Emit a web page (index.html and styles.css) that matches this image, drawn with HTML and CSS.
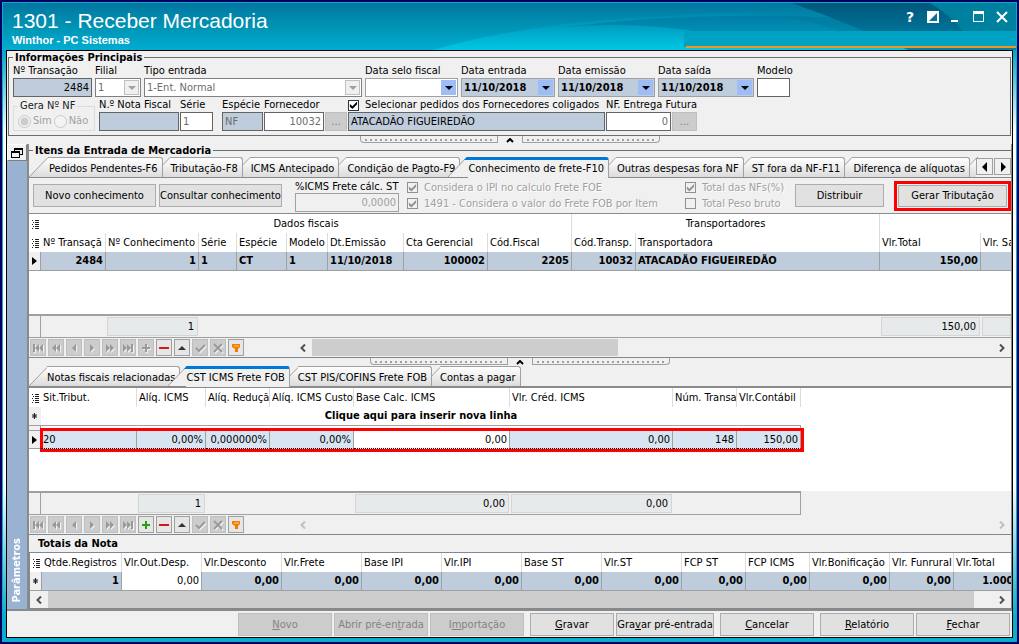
FILE: index.html
```html
<!DOCTYPE html>
<html lang="pt-BR">
<head>
    <meta charset="UTF-8">
    <meta name="viewport" content="width=device-width, initial-scale=1.0">
    <title>1301 - Receber Mercadoria</title>
    <link rel="stylesheet" href="styles.css">
</head>
<body>
    <svg class="sprite" width="0" height="0" aria-hidden="true">
        <defs>
            <linearGradient id="tabFill" x1="0" y1="0" x2="0" y2="1">
                <stop offset="0" stop-color="#ffffff"/>
                <stop offset="1" stop-color="#dcdcdc"/>
            </linearGradient>
            <symbol id="slant" viewBox="0 0 20 20"><path d="M0 20L19 0.500H20V20z" fill="url(#tabFill)"/><path d="M0 20L19 0.500H20" fill="none" stroke="#a0a0a0"/></symbol>
            <symbol id="slantOn" viewBox="0 0 20 20"><path d="M0 20L19 0H20V20z" fill="#f0f0f0"/><path d="M0 20L19 0" fill="none" stroke="#a0a0a0"/><path d="M16 3L19 0H20V3z" fill="#0078d7"/></symbol>
            <symbol id="first" viewBox="0 0 14 14"><path d="M2 3h2v8H2zM8 3v8L4 7zM12 3v8L8 7z"/></symbol>
            <symbol id="pageBack" viewBox="0 0 14 14"><path d="M7 3v8L3 7zM11 3v8L7 7z"/></symbol>
            <symbol id="back" viewBox="0 0 14 14"><path d="M9 3v8L5 7z"/></symbol>
            <symbol id="next" viewBox="0 0 14 14"><path d="M5 3v8l4-4z"/></symbol>
            <symbol id="pageNext" viewBox="0 0 14 14"><path d="M3 3v8l4-4zM7 3v8l4-4z"/></symbol>
            <symbol id="last" viewBox="0 0 14 14"><path d="M2 3v8l4-4zM6 3v8l4-4zM10 3h2v8h-2z"/></symbol>
            <symbol id="plus" viewBox="0 0 14 14"><path d="M6 3h2v3h3v2H8v3H6V8H3V6h3z"/></symbol>
            <symbol id="minus" viewBox="0 0 14 14"><path d="M2 6h10v2H2z"/></symbol>
            <symbol id="up" viewBox="0 0 14 14"><path d="M7 5l4 4H3z"/></symbol>
            <symbol id="check" viewBox="0 0 14 14"><path d="M3 7l3 3 6-6" fill="none" stroke="currentColor" stroke-width="2"/></symbol>
            <symbol id="cross" viewBox="0 0 14 14"><path d="M3 3l8 8M11 3l-8 8" fill="none" stroke="currentColor" stroke-width="2"/></symbol>
            <symbol id="funnel" viewBox="0 0 14 14"><path d="M3 3h8v3l-2 2v3H6V8L3 6z" fill="#f57c00"/><path d="M5 5h5" stroke="#ffd080"/></symbol>
            <symbol id="list" viewBox="0 0 8 10"><path d="M0 1.500h1M3 1.500h4M1 3.500h1M3 3.500h4M0 5.500h1M3 5.500h4M1 7.500h1M3 7.500h4M0 9.500h1M3 9.500h4" stroke="#222"/></symbol>
            <symbol id="marker" viewBox="0 0 6 8"><path d="M0 0v8l5-4z"/></symbol>
            <symbol id="star" viewBox="0 0 7 8"><path d="M2.500 1v6M0 4h5M0.500 2l4 4M4.500 2l-4 4" stroke="#222"/></symbol>
            <symbol id="left" viewBox="0 0 8 8"><path d="M6 0.500L2.500 4L6 7.500" fill="none" stroke="currentColor" stroke-width="2"/></symbol>
            <symbol id="right" viewBox="0 0 8 8"><path d="M2 0.500L5.500 4L2 7.500" fill="none" stroke="currentColor" stroke-width="2"/></symbol>
        </defs>
    </svg>

    <div class="window">
        <header class="titlebar">
            <svg class="waves" viewBox="0 0 1013 47" preserveAspectRatio="none" aria-hidden="true">
                <defs>
                    <linearGradient id="sky" x1="0" y1="0" x2="0" y2="1">
                        <stop offset="0" stop-color="#0376a1"/>
                        <stop offset="0.500" stop-color="#0093b4"/>
                        <stop offset="1" stop-color="#00add0"/>
                    </linearGradient>
                    <linearGradient id="glow" x1="0" y1="0" x2="0" y2="1">
                        <stop offset="0" stop-color="#0087ae"/>
                        <stop offset="1" stop-color="#00c8e4"/>
                    </linearGradient>
                    <linearGradient id="deep" x1="0" y1="0" x2="0" y2="1">
                        <stop offset="0" stop-color="#00587c"/>
                        <stop offset="1" stop-color="#0083a8"/>
                    </linearGradient>
                </defs>
                <path d="M0 0H1013V47H0z" fill="url(#sky)"/>
                <path d="M430 47Q530 18 680 12Q780 4 840 30L1013 28V47z" fill="url(#glow)"/>
                <path d="M560 24Q720 5 880 18L1013 14V30H700Q640 18 560 24z" fill="#006a93" opacity="0.400"/>
                <path d="M789 0Q850 22 905 47H1013V0z" fill="url(#deep)"/>
                <path d="M927 0Q950 14 962 30H1013V0z" fill="#00809f"/>
                <path d="M681 28H1013V44H681z" fill="#00a2c4"/>
            </svg>
            <div class="caption">
                <h1>1301 - Receber Mercadoria</h1>
                <p>Winthor - PC Sistemas</p>
            </div>
            <div class="window-buttons">
                <button type="button" aria-label="Ajuda"><span class="help">?</span></button>
                <button type="button" aria-label="Tema"><svg viewBox="0 0 12 12" width="12" height="12"><path d="M1 1h10v10H1z" fill="#0a7292" stroke="#fff" stroke-width="2"/><path d="M0 0h12L0 12z" fill="#fff"/></svg></button>
                <button type="button" aria-label="Minimizar"><svg viewBox="0 0 12 12" width="12" height="12"><path d="M1 9h7v2H1z" fill="#fff"/></svg></button>
                <button type="button" aria-label="Maximizar"><svg viewBox="0 0 12 12" width="12" height="12"><path d="M0 0h11v11H0zM1 3v7h9V3z" fill="#fff" fill-rule="evenodd"/></svg></button>
                <button type="button" aria-label="Fechar janela"><svg viewBox="0 0 12 12" width="12" height="12"><path d="M1 1l10 10M11 1L1 11" stroke="#fff" stroke-width="2"/></svg></button>
            </div>
            <div class="accent"></div>
        </header>

        <main class="client">
            <fieldset class="info">
                <legend>Informações Principais</legend>
                <div class="info-row first-row">
                    <div class="field">
                        <label for="transacao">Nº Transação</label>
                        <input id="transacao" class="blue num" value="2484" readonly>
                    </div>
                    <div class="field">
                        <label for="filial">Filial</label>
                        <span class="combo off"><select id="filial" disabled><option>1</option></select><i></i></span>
                    </div>
                    <div class="field">
                        <label for="tipo">Tipo entrada</label>
                        <span class="combo off"><select id="tipo" disabled><option>1-Ent. Normal</option></select><i></i></span>
                    </div>
                    <div class="field">
                        <label for="selo">Data selo fiscal</label>
                        <span class="combo"><select id="selo"><option></option></select><i></i></span>
                    </div>
                    <div class="field">
                        <label for="entrada">Data entrada</label>
                        <span class="combo date"><select id="entrada"><option>11/10/2018</option></select><i></i></span>
                    </div>
                    <div class="field">
                        <label for="emissao">Data emissão</label>
                        <span class="combo date"><select id="emissao"><option>11/10/2018</option></select><i></i></span>
                    </div>
                    <div class="field">
                        <label for="saida">Data saída</label>
                        <span class="combo date"><select id="saida"><option>11/10/2018</option></select><i></i></span>
                    </div>
                    <div class="field">
                        <label for="modelo">Modelo</label>
                        <input id="modelo">
                    </div>
                </div>
                <div class="info-row second-row">
                    <fieldset class="generate" disabled>
                        <legend>Gera Nº NF</legend>
                        <label><input type="radio" name="gera" checked>Sim</label>
                        <label><input type="radio" name="gera">Não</label>
                    </fieldset>
                    <div class="field">
                        <label for="nota">N.º Nota Fiscal</label>
                        <input id="nota" class="blue" readonly>
                    </div>
                    <div class="field">
                        <label for="serie">Série</label>
                        <input id="serie" class="dim" value="1">
                    </div>
                    <div class="field especie">
                        <label for="especie">Espécie</label>
                        <input id="especie" class="blue dim" value="NF" readonly>
                    </div>
                    <div class="field">
                        <label for="fornecedor">Fornecedor</label>
                        <input id="fornecedor" class="num dim" value="10032">
                    </div>
                    <button type="button" class="more" disabled>...</button>
                    <div class="field">
                        <label class="tick linked"><input type="checkbox" checked>Selecionar pedidos dos Fornecedores coligados</label>
                        <input class="blue" value="ATACADÃO FIGUEIREDÃO" aria-label="Nome do fornecedor" readonly>
                    </div>
                    <div class="field">
                        <label for="futura">NF. Entrega Futura</label>
                        <input id="futura" class="num dim" value="0">
                    </div>
                    <button type="button" class="more" disabled>...</button>
                </div>
            </fieldset>

            <div class="splitter"><span></span><svg viewBox="0 0 8 5" width="8" height="5"><path d="M1 4l3-3 3 3" fill="none" stroke="#000" stroke-width="2"/></svg><span></span></div>

            <div class="work">
                <aside class="sidebar">
                    <button type="button" class="restore" aria-label="Restaurar"><svg viewBox="0 0 12 12" width="12" height="12"><path d="M3 1h9v7H9V7h2V3H4v1H3zM0 4h9v7H0zM1 6v4h7V6z" fill-rule="evenodd"/></svg></button>
                    <div class="params"><span>Parâmetros</span></div>
                </aside>

                <section class="panel">
                    <h2 class="group-title">Itens da Entrada de Mercadoria</h2>
                    <nav class="tabs main-tabs">
                        <button type="button" class="tab"><svg><use href="#slant"/></svg><span>Pedidos Pendentes-F6</span></button>
                        <button type="button" class="tab"><svg><use href="#slant"/></svg><span>Tributação-F8</span></button>
                        <button type="button" class="tab"><svg><use href="#slant"/></svg><span>ICMS Antecipado</span></button>
                        <button type="button" class="tab"><svg><use href="#slant"/></svg><span>Condição de Pagto-F9</span></button>
                        <button type="button" class="tab active"><svg><use href="#slantOn"/></svg><span>Conhecimento de frete-F10</span></button>
                        <button type="button" class="tab"><svg><use href="#slant"/></svg><span>Outras despesas fora NF</span></button>
                        <button type="button" class="tab"><svg><use href="#slant"/></svg><span>ST fora da NF-F11</span></button>
                        <button type="button" class="tab"><svg><use href="#slant"/></svg><span>Diferença de alíquotas</span></button>
                        <span class="tab"><svg><use href="#slant"/></svg></span>
                        <div class="tab-arrows">
                            <button type="button" aria-label="Abas anteriores"><svg viewBox="0 0 6 10" width="6" height="10"><path d="M5 0v10L0 5z"/></svg></button>
                            <button type="button" aria-label="Próximas abas"><svg viewBox="0 0 6 10" width="6" height="10"><path d="M1 0v10l5-5z"/></svg></button>
                        </div>
                    </nav>

                    <div class="toolbar">
                        <button type="button" class="btn tool">Novo conhecimento</button>
                        <button type="button" class="btn tool">Consultar conhecimento</button>
                        <div class="field rate">
                            <label for="icms">%ICMS Frete cálc. ST</label>
                            <input id="icms" class="num" value="0,0000" disabled>
                        </div>
                        <div class="ticks wide">
                            <label class="tick off"><input type="checkbox" checked disabled>Considera o IPI no calculo Frete FOE</label>
                            <label class="tick off"><input type="checkbox" checked disabled>1491 - Considera o valor do Frete FOB por Item</label>
                        </div>
                        <div class="ticks">
                            <label class="tick off"><input type="checkbox" checked disabled>Total das NFs(%)</label>
                            <label class="tick off"><input type="checkbox" disabled>Total Peso bruto</label>
                        </div>
                        <button type="button" class="btn share">Distribuir</button>
                        <div class="highlight"><button type="button" class="btn">Gerar Tributação</button></div>
                    </div>

                    <div class="grid">
                        <div class="grid-body">
                            <table class="freight">
                                <colgroup><col class="w12"><col class="w65"><col class="w93"><col class="w38"><col class="w50"><col class="w41"><col class="w76"><col class="w84"><col class="w84"><col class="w64"><col class="w244"><col class="w101"><col class="w84"></colgroup>
                                <thead>
                                    <tr>
                                        <th class="mark"><svg width="8" height="10"><use href="#list"/></svg></th>
                                        <th colspan="8" class="band">Dados fiscais</th>
                                        <th colspan="2" class="band">Transportadores</th>
                                        <th colspan="2" class="band"></th>
                                    </tr>
                                    <tr>
                                        <th class="mark"><svg width="8" height="10"><use href="#list"/></svg></th>
                                        <th>Nº Transaçã</th><th>Nº Conhecimento</th><th>Série</th><th>Espécie</th><th>Modelo</th><th>Dt.Emissão</th><th>Cta Gerencial</th><th>Cód.Fiscal</th><th>Cód.Transp.</th><th>Transportadora</th><th>Vlr.Total</th><th>Vlr. Saldo</th>
                                    </tr>
                                </thead>
                                <tbody>
                                    <tr class="strong">
                                        <td class="mark"><svg width="6" height="8"><use href="#marker"/></svg></td>
                                        <td class="num">2484</td><td class="num">1</td><td>1</td><td>CT</td><td>1</td><td>11/10/2018</td><td class="num">100002</td><td class="num">2205</td><td class="num">10032</td><td>ATACADÃO FIGUEIREDÃO</td><td class="num">150,00</td><td></td>
                                    </tr>
                                </tbody>
                            </table>
                        </div>
                        <div class="summary freight-sum">
                            <span class="edge"></span><span></span><output>1</output><span></span><output>150,00</output><output></output>
                        </div>
                        <div class="navigator">
                            <button type="button" disabled aria-label="Primeiro"><svg><use href="#first"/></svg></button>
                            <button type="button" disabled aria-label="Página anterior"><svg><use href="#pageBack"/></svg></button>
                            <button type="button" disabled aria-label="Anterior"><svg><use href="#back"/></svg></button>
                            <button type="button" disabled aria-label="Próximo"><svg><use href="#next"/></svg></button>
                            <button type="button" disabled aria-label="Próxima página"><svg><use href="#pageNext"/></svg></button>
                            <button type="button" disabled aria-label="Último"><svg><use href="#last"/></svg></button>
                            <button type="button" disabled aria-label="Inserir"><svg><use href="#plus"/></svg></button>
                            <button type="button" class="red" aria-label="Excluir"><svg><use href="#minus"/></svg></button>
                            <button type="button" aria-label="Editar"><svg><use href="#up"/></svg></button>
                            <button type="button" disabled aria-label="Gravar registro"><svg><use href="#check"/></svg></button>
                            <button type="button" disabled aria-label="Cancelar registro"><svg><use href="#cross"/></svg></button>
                            <button type="button" aria-label="Filtrar"><svg><use href="#funnel"/></svg></button>
                            <div class="scrollbar offset">
                                <svg><use href="#left"/></svg><div class="track"><i class="thumb part"></i></div><svg><use href="#right"/></svg>
                            </div>
                        </div>
                    </div>

                    <div class="splitter"><span></span><svg viewBox="0 0 8 5" width="8" height="5"><path d="M1 4l3-3 3 3" fill="none" stroke="#000" stroke-width="2"/></svg><span></span></div>

                    <nav class="tabs sub-tabs">
                        <button type="button" class="tab"><svg><use href="#slant"/></svg><span>Notas fiscais relacionadas</span></button>
                        <button type="button" class="tab active"><svg><use href="#slantOn"/></svg><span>CST ICMS Frete FOB</span></button>
                        <button type="button" class="tab"><svg><use href="#slant"/></svg><span>CST PIS/COFINS Frete FOB</span></button>
                        <button type="button" class="tab"><svg><use href="#slant"/></svg><span>Contas a pagar</span></button>
                    </nav>

                    <div class="grid">
                        <div class="grid-body short">
                            <table class="taxes">
                                <colgroup><col class="w12"><col class="w96"><col class="w69"><col class="w64"><col class="w84"><col class="w156"><col class="w163"><col class="w64"><col class="w64"></colgroup>
                                <thead>
                                    <tr>
                                        <th class="mark"><svg width="8" height="10"><use href="#list"/></svg></th>
                                        <th>Sit.Tribut.</th><th>Alíq. ICMS</th><th>Alíq. Reduçã</th><th>Alíq. ICMS Custo</th><th>Base Calc. ICMS</th><th>Vlr. Créd. ICMS</th><th>Núm. Transa</th><th>Vlr.Contábil</th>
                                    </tr>
                                </thead>
                                <tbody>
                                    <tr class="insert">
                                        <td class="mark"><svg width="7" height="8"><use href="#star"/></svg></td>
                                        <td colspan="8">Clique aqui para inserir nova linha</td>
                                    </tr>
                                    <tr class="gap"><td class="mark"></td><td colspan="8"></td></tr>
                                    <tr class="picked">
                                        <td class="mark"><svg width="6" height="8"><use href="#marker"/></svg></td>
                                        <td class="start">20</td><td class="num">0,00%</td><td class="num">0,000000%</td><td class="num">0,00%</td><td class="num focus">0,00</td><td class="num">0,00</td><td class="num">148</td><td class="num end">150,00</td>
                                    </tr>
                                </tbody>
                            </table>
                        </div>
                        <div class="summary taxes-sum">
                            <span class="edge"></span><span></span><output>1</output><span></span><output>0,00</output><output>0,00</output>
                        </div>
                        <div class="navigator">
                            <button type="button" disabled aria-label="Primeiro"><svg><use href="#first"/></svg></button>
                            <button type="button" disabled aria-label="Página anterior"><svg><use href="#pageBack"/></svg></button>
                            <button type="button" disabled aria-label="Anterior"><svg><use href="#back"/></svg></button>
                            <button type="button" disabled aria-label="Próximo"><svg><use href="#next"/></svg></button>
                            <button type="button" disabled aria-label="Próxima página"><svg><use href="#pageNext"/></svg></button>
                            <button type="button" disabled aria-label="Último"><svg><use href="#last"/></svg></button>
                            <button type="button" class="green" aria-label="Inserir"><svg><use href="#plus"/></svg></button>
                            <button type="button" class="red" aria-label="Excluir"><svg><use href="#minus"/></svg></button>
                            <button type="button" aria-label="Editar"><svg><use href="#up"/></svg></button>
                            <button type="button" disabled aria-label="Gravar registro"><svg><use href="#check"/></svg></button>
                            <button type="button" disabled aria-label="Cancelar registro"><svg><use href="#cross"/></svg></button>
                            <button type="button" aria-label="Filtrar"><svg><use href="#funnel"/></svg></button>
                            <div class="scrollbar offset idle">
                                <svg><use href="#left"/></svg><div class="track"></div><svg><use href="#right"/></svg>
                            </div>
                        </div>
                    </div>

                    <h2 class="totals-title">Totais da Nota</h2>
                    <div class="totals">
                        <table>
                            <colgroup><col class="w12"><col class="w80"><col class="w80"><col class="w80"><col class="w80"><col class="w80"><col class="w80"><col class="w80"><col class="w80"><col class="w64"><col class="w64"><col class="w80"><col class="w64"><col class="w80"></colgroup>
                            <thead>
                                <tr>
                                    <th class="mark"><svg width="8" height="10"><use href="#list"/></svg></th>
                                    <th>Qtde.Registros</th><th>Vlr.Out.Desp.</th><th>Vlr.Desconto</th><th>Vlr.Frete</th><th>Base IPI</th><th>Vlr.IPI</th><th>Base ST</th><th>Vlr.ST</th><th>FCP ST</th><th>FCP ICMS</th><th>Vlr.Bonificação</th><th>Vlr. Funrural</th><th>Vlr.Total</th>
                                </tr>
                            </thead>
                            <tbody>
                                <tr class="strong">
                                    <td class="mark"><svg width="7" height="8"><use href="#star"/></svg></td>
                                    <td class="num">1</td><td class="num plain">0,00</td><td class="num">0,00</td><td class="num">0,00</td><td class="num">0,00</td><td class="num">0,00</td><td class="num">0,00</td><td class="num">0,00</td><td class="num">0,00</td><td class="num">0,00</td><td class="num">0,00</td><td class="num">0,00</td><td class="num">1.000,00</td>
                                </tr>
                            </tbody>
                        </table>
                        <div class="scrollbar">
                            <svg><use href="#left"/></svg><div class="track"><i class="thumb most"></i></div><svg><use href="#right"/></svg>
                        </div>
                    </div>
                </section>
            </div>

            <footer class="actions">
                <button type="button" class="btn" disabled><u>N</u>ovo</button>
                <button type="button" class="btn" disabled>Abrir pré-en<u>t</u>rada</button>
                <button type="button" class="btn" disabled>I<u>m</u>portação</button>
                <button type="button" class="btn save"><u>G</u>ravar</button>
                <button type="button" class="btn presave">Gra<u>v</u>ar pré-entrada</button>
                <button type="button" class="btn apart"><u>C</u>ancelar</button>
                <button type="button" class="btn apart"><u>R</u>elatório</button>
                <button type="button" class="btn"><u>F</u>echar</button>
            </footer>
        </main>
    </div>
</body>
</html>
```
FILE: styles.css
```css
* {
    box-sizing: border-box;
}
body {
    margin: 0;
    background-color: #00005f;
    color: #000;
    font-family: "DejaVu Sans Condensed", "Noto Sans", sans-serif;
    font-size: 11px;
    line-height: 14px;
}
input, select, button {
    font: inherit;
    color: inherit;
    margin: 0;
    border-radius: 0;
}
button {
    padding: 0;
}
svg {
    display: block;
    flex: none;
}
.sprite {
    position: absolute;
}

/* window frame */
.window {
    display: flex;
    flex-direction: column;
    min-height: 100vh;
    border: 2px solid #00005f;
    background: linear-gradient(#00a5c5 48px, #fff 130px, #fff 75%, #08aecb 96%);
    box-shadow: inset 0 0 0 1px #10a9c6;
}
.titlebar {
    position: relative;
    display: flex;
    justify-content: space-between;
    height: 47px;
    margin: 1px 1px 0;
    color: #fff;
}
.waves {
    position: absolute;
    width: 100%;
    height: 100%;
}
.caption {
    position: relative;
    padding: 6px 9px;
    font-family: "Liberation Sans", Arial, sans-serif;
}
.caption h1 {
    margin: 0;
    font-size: 21px;
    font-weight: normal;
    line-height: 24px;
}
.caption p {
    margin: 1px 0 0;
    font-size: 11px;
    font-weight: bold;
    line-height: 13px;
}
.window-buttons {
    position: relative;
    display: flex;
    gap: 11px;
    padding: 8px 8px;
}
.window-buttons button {
    width: 12px;
    height: 12px;
    border: none;
    background: none;
}
.help {
    display: block;
    font-family: "DejaVu Sans", sans-serif;
    font-size: 14px;
    font-weight: bold;
    line-height: 12px;
}
.accent {
    position: absolute;
    right: 0;
    bottom: 2px;
    width: 330px;
    height: 2px;
    background-color: #f7941d;
}
.client {
    display: flex;
    flex: 1;
    flex-direction: column;
    margin: 0 4px 4px;
    border: 1px solid #000;
    background-color: #f0f0f0;
    overflow: hidden;
}

/* main information */
.info {
    min-width: 0;
    height: 85px;
    margin: 0 1px;
    padding: 0 0 0 4px;
    border: 1px solid #6d6d6d;
}
.info > legend, .group-title, .totals-title {
    margin: 0;
    padding: 0 2px;
    font-size: 11px;
    font-weight: bold;
    line-height: 13px;
}
.info-row {
    display: grid;
    align-items: end;
    height: 32px;
    margin-bottom: 2px;
}
.first-row {
    grid-template-columns: 79px 46px 218px 93px 94px 97px 96px 33px;
    column-gap: 3px;
}
.second-row {
    grid-template-columns: 85px 80px 33px 49px 60px 22px 257px 65px 25px;
    column-gap: 1px;
}
.field {
    display: flex;
    flex-direction: column;
    min-width: 0;
    white-space: nowrap;
}
.especie {
    padding-left: 8px;
}
.field input:not([type]) {
    width: 100%;
    height: 19px;
    padding: 0 2px;
    border: 1px solid #646464;
    background-color: #fff;
}
.field input.blue:not([type]) {
    background-color: #bfccdb;
}
.num, .field input.num {
    text-align: right;
}
.field input.dim {
    color: #6d6d6d;
}
.combo {
    display: grid;
    height: 19px;
    border: 1px solid #a0a0a0;
    background-color: #fff;
}
.combo select {
    grid-area: 1 / 1;
    width: 100%;
    height: 17px;
    padding: 0 2px;
    border: none;
    background: none;
    appearance: none;
    opacity: 1;
}
.combo i {
    grid-area: 1 / 1;
    justify-self: end;
    display: flex;
    align-items: center;
    justify-content: center;
    width: 15px;
    margin: 1px;
    background-color: #9ebcf5;
    pointer-events: none;
}
.combo i::before {
    content: "";
    border: 4px solid transparent;
    border-top-color: #000;
    border-bottom: none;
}
.combo.date {
    background-color: #bfccdb;
    font-weight: bold;
}
.combo.off {
    border: 1px solid #808080;
    color: #6d6d6d;
}
.combo.off i {
    border: 1px solid #c0c0c0;
    background-color: #f0f0f0;
}
.combo.off i::before {
    border-top-color: #a0a0a0;
}
.generate {
    display: flex;
    gap: 2px;
    min-width: 0;
    height: 31px;
    margin: 0 3px 0 0;
    padding: 2px 4px;
    border: 1px solid #dcdcdc;
    color: #a0a0a0;
    white-space: nowrap;
}
.generate legend {
    padding: 0 2px;
    color: #222;
    line-height: 12px;
}
.generate label {
    display: flex;
    align-items: center;
    gap: 2px;
}
.generate input {
    width: 13px;
    height: 13px;
}
.more {
    height: 19px;
    border: 1px solid #bfbfbf;
    background-color: #ccc;
    color: #838383;
}
.tick {
    display: flex;
    align-items: center;
    gap: 6px;
    height: 16px;
    white-space: nowrap;
}
.tick input {
    display: grid;
    flex: none;
    width: 11px;
    height: 11px;
    border: 1px solid #333;
    background-color: #fff;
    appearance: none;
}
.tick input:checked::before {
    content: "";
    background-color: #000;
    clip-path: polygon(10% 40%, 38% 65%, 90% 12%, 90% 42%, 38% 95%, 10% 70%);
}
.tick.off {
    color: #a0a0a0;
    text-shadow: 1px 1px 0 #fff;
}
.tick.off input {
    border-color: #909090;
    background-color: #f0f0f0;
}
.tick.off input:checked::before {
    background-color: #909090;
}
.tick.linked {
    height: 14px;
}

.splitter {
    display: flex;
    justify-content: center;
    gap: 8px;
    height: 8px;
}
.splitter span {
    width: 138px;
    height: 7px;
    border: 1px solid #a0a0a0;
    border-top: none;
    border-radius: 0 0 0 4px;
    background: repeating-linear-gradient(90deg, #a0a0a0 0 2px, #f0f0f0 2px 5px) 4px 3px / 128px 2px no-repeat;
}
.splitter span:last-child {
    border-radius: 0 0 4px 0;
}
.splitter svg {
    margin-top: 2px;
}

/* side strip and working panel */
.work {
    display: flex;
    flex: 1;
    border-bottom: 2px solid #8a8a8a;
}
.sidebar {
    display: flex;
    flex-direction: column;
    width: 20px;
}
.restore {
    height: 17px;
    padding: 1px 3px;
    border: 1px solid #fff;
    border-right-color: #808080;
    border-bottom-color: #808080;
    background-color: #f0f0f0;
}
.params {
    display: flex;
    flex: 1;
    align-items: flex-end;
    padding: 0 3px 6px;
    background-color: #99b2d1;
    color: #fff;
    font-weight: bold;
}
.params span {
    writing-mode: vertical-rl;
    transform: rotate(180deg);
}
.panel {
    display: flex;
    flex: 1;
    flex-direction: column;
    min-width: 0;
    border-right: 1px solid #8a8a8a;
    border-left: 2px solid #8a8a8a;
}
.group-title {
    display: flex;
    align-items: center;
    gap: 2px;
    padding: 0;
    line-height: 13px;
}
.group-title::before, .group-title::after {
    content: "";
    width: 4px;
    height: 1px;
    background-color: #6d6d6d;
}
.group-title::after {
    flex: 1;
}

/* tabs */
.tabs {
    display: flex;
    align-items: flex-end;
    height: 21px;
    border-bottom: 1px solid #8a8a8a;
}
.tab {
    position: relative;
    display: flex;
    height: 20px;
    margin-right: -12px;
    border: none;
    background: none;
    white-space: nowrap;
}
.tab svg {
    width: 20px;
    height: 20px;
}
.tab span {
    flex: 1;
    height: 100%;
    padding: 4px 4px 0 0;
    border: 1px solid #a0a0a0;
    border-width: 1px 1px 0 0;
    border-radius: 0 3px 0 0;
    background: linear-gradient(#fff, #dcdcdc);
    text-align: right;
}
.tab:nth-child(1) { z-index: 9; }
.tab:nth-child(2) { z-index: 8; }
.tab:nth-child(3) { z-index: 7; }
.tab:nth-child(4) { z-index: 6; }
.tab:nth-child(5) { z-index: 5; }
.tab:nth-child(6) { z-index: 4; }
.tab:nth-child(7) { z-index: 3; }
.tab:nth-child(8) { z-index: 2; }
.tab.active {
    z-index: 10;
    height: 21px;
    margin-bottom: -1px;
}
.tab.active span {
    padding-top: 2px;
    border-top: 3px solid #0078d7;
    background: #f0f0f0;
}
.sub-tabs .tab svg {
    margin-right: -2px;
}
.sub-tabs .tab {
    margin-right: -10px;
}
.sub-tabs .tab:first-child {
    margin-right: -12px;
}
.tab-arrows {
    position: relative;
    z-index: 11;
    display: flex;
    gap: 1px;
    margin-left: auto;
    padding-bottom: 2px;
    background-color: #f0f0f0;
}
.tab-arrows button {
    display: flex;
    align-items: center;
    justify-content: center;
    width: 17px;
    height: 17px;
    border: 1px solid #a0a0a0;
    background-color: #f0f0f0;
}

/* buttons over the grid */
.btn {
    height: 23px;
    border: 1px solid #adadad;
    background-color: #e1e1e1;
    white-space: nowrap;
}
.btn:disabled {
    border-color: #bfbfbf;
    background-color: #ccc;
    color: #838383;
}
.toolbar {
    display: flex;
    align-items: center;
    height: 35px;
    padding-left: 4px;
}
.tool {
    width: 123px;
    margin-right: 3px;
}
.rate {
    width: 104px;
    margin: 0 8px 0 10px;
}
.rate label {
    line-height: 13px;
}
.field.rate input {
    border-color: #a0a0a0;
    background-color: #f0f0f0;
    color: #a0a0a0;
}
.wide {
    width: 278px;
}
.share {
    width: 89px;
    margin-left: auto;
}
.highlight {
    display: flex;
    margin-left: 10px;
    padding: 1px;
    border: 3px solid #f00;
}
.highlight .btn {
    width: 109px;
    height: 22px;
}

/* data grids */
.grid {
    display: flex;
    flex: 1 0 auto;
    flex-direction: column;
    border-top: 1px solid #8a8a8a;
    border-bottom: 1px solid #808890;
    min-width: 0;
}
.grid-body {
    flex: 1;
    min-height: 97px;
    background-color: #fff;
    overflow: hidden;
}
.grid-body.short {
    min-height: 100px;
}
table {
    width: 0;
    border-collapse: separate;
    border-spacing: 0;
    table-layout: fixed;
}
.w12 { width: 12px; }
.w38 { width: 38px; }
.w41 { width: 41px; }
.w50 { width: 50px; }
.w64 { width: 64px; }
.w65 { width: 65px; }
.w69 { width: 69px; }
.w76 { width: 76px; }
.w80 { width: 80px; }
.w84 { width: 84px; }
.w93 { width: 93px; }
.w96 { width: 96px; }
.w101 { width: 101px; }
.w156 { width: 156px; }
.w163 { width: 163px; }
.w244 { width: 244px; }
th, td {
    height: 19px;
    padding: 0 2px;
    overflow: hidden;
    white-space: nowrap;
}
th {
    border-right: 1px solid #dcdcdc;
    background-color: #fff;
    font-weight: normal;
    text-align: left;
}
th.band {
    text-align: center;
}
td {
    border-right: 1px solid #a0a0a0;
    border-bottom: 1px solid #a0a0a0;
}
.mark {
    padding: 0 0 0 3px;
    border-right: 1px solid #a0a0a0;
    background-color: #f0f0f0;
}
th.mark {
    border-right-color: #fff;
    background-color: #fff;
}
tr.strong td:not(.mark) {
    background-color: #bfccdb;
    font-weight: bold;
}
tr.strong td.plain:not(.mark) {
    background-color: #fff;
    font-weight: normal;
}
.insert td {
    border-right: none;
    font-weight: bold;
    text-align: center;
}
.gap td {
    height: 5px;
}
.picked td {
    height: 18px;
}
.picked td:not(.mark) {
    border-bottom: 1px dotted #000;
    background-color: #d7e4f1;
    box-shadow: 0 -3px 0 #f00, 0 3px 0 #f00;
}
.picked td.focus:not(.mark) {
    background-color: #fff;
}
/* the red frame closes on the first and the last cell */
.picked td.start:not(.mark) {
    box-shadow: inset 2px 0 0 #f00, 0 -3px 0 #f00, 0 3px 0 #f00, -1px -3px 0 #f00, -1px 3px 0 #f00;
}
.picked td.end:not(.mark) {
    box-shadow: 0 -3px 0 #f00, 0 3px 0 #f00, 3px -3px 0 #f00, 3px 3px 0 #f00;
}
.summary {
    display: grid;
    align-items: center;
    column-gap: 2px;
    height: 24px;
    border-top: 2px solid #a0a0a0;
    border-bottom: 1px solid #a0a0a0;
}
.summary output {
    height: 19px;
    padding: 2px 3px;
    border: 1px solid #d5d5d5;
    background-color: #e6eaeb;
    text-align: right;
}
.summary span {
    align-self: stretch;
}
.freight-sum {
    grid-template-columns: 12px 62px 91px 679px 99px 1fr;
}
.taxes-sum {
    grid-template-columns: 12px 93px 67px 146px 154px 161px;
    width: 772px;
    border-right: 1px solid #a0a0a0;
}
.edge {
    border-right: 1px solid #a0a0a0;
}
.navigator {
    display: flex;
    align-items: center;
    gap: 2px;
    height: 19px;
    padding-left: 1px;
}
.navigator button {
    width: 16px;
    height: 17px;
    border: 1px solid #a0a0a0;
    background-color: #e6e6e6;
    color: #333;
    fill: currentColor;
}
.navigator button:disabled {
    border-color: #bfbfbf;
    background-color: #ccc;
    color: #999;
}
.navigator button:disabled svg {
    filter: drop-shadow(1px 1px 0 #f4f4f4);
}
.navigator button.red {
    color: #d01818;
}
.navigator button.green {
    color: #28a010;
}
.navigator button svg {
    width: 14px;
    height: 14px;
}
.scrollbar {
    display: flex;
    flex: 1;
    align-items: center;
    height: 17px;
    color: #505050;
}
.scrollbar svg {
    width: 8px;
    height: 8px;
    margin: 0 5px;
}
.scrollbar.offset {
    margin-left: 48px;
}
.scrollbar.idle {
    color: #bfbfbf;
}
.track {
    flex: 1;
    height: 17px;
}
.thumb {
    display: block;
    height: 17px;
    background-color: #cdcdcd;
}
.thumb.part {
    width: 45%;
}
.thumb.most {
    width: 98%;
}
.totals-title {
    padding: 2px 9px;
}
.totals {
    border: 1px solid #808890;
    border-right: none;
    overflow: hidden;
}

/* bottom buttons */
.actions {
    display: flex;
    justify-content: flex-end;
    gap: 2px;
    padding: 2px 2px 1px;
}
.actions .btn {
    width: 94px;
}
.actions .save {
    width: 84px;
    margin-left: 4px;
}
.actions .presave {
    width: 98px;
}
.actions .apart {
    margin-left: 4px;
}
```
